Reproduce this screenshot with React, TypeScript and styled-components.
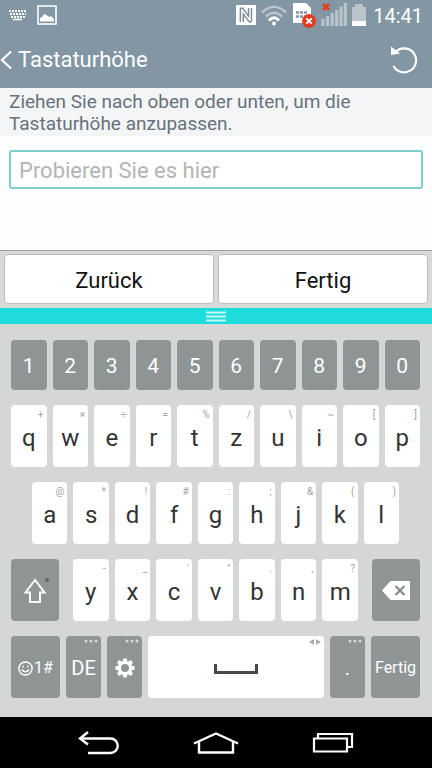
import React from "react";
import styled, { createGlobalStyle, css } from "styled-components";

const GlobalStyle = createGlobalStyle`
  *, *::before, *::after { box-sizing: border-box; }
  body { margin: 0; background: #fff; font-family: Roboto, "Noto Sans", sans-serif; }
  button, input { font-family: inherit; }
  svg { display: block; flex: none; }
`;

const Screen = styled.div`
  display: flex;
  flex-direction: column;
  min-height: 100vh;
  background: #fdfefe;
`;

const Header = styled.header`
  background: #8296a3;
  color: #fff;
`;

const StatusBar = styled.div`
  display: flex;
  align-items: center;
  justify-content: space-between;
  height: 30px;
  padding: 0 9px;
`;

const StatusGroup = styled.div<{ $gap: number }>`
  display: flex;
  align-items: center;
  gap: ${(p) => p.$gap}px;
`;

const Clock = styled.time`
  padding-top: 2px;
  font-size: 20px;
  line-height: 28px;
  margin-left: 2px;
`;

const TitleBar = styled.div`
  display: flex;
  align-items: center;
  justify-content: space-between;
  height: 58px;
  padding: 1px 14px 0 0;
`;

const IconButton = styled.button`
  display: flex;
  padding: 0;
  border: 0;
  background: none;
  color: inherit;
`;

const BackLink = styled.a`
  display: flex;
  align-items: center;
  gap: 5px;
  color: inherit;
  text-decoration: none;
`;

const Title = styled.h1`
  margin: 0;
  font-size: 22px;
  line-height: 28px;
  font-weight: 400;
`;

const Instruction = styled.label`
  display: block;
  padding: 3px 64px 1px 9px;
  background: #f4f5f7;
  color: #66727c;
  font-size: 19px;
  line-height: 22px;
`;

const Content = styled.main`
  flex: 1;
  padding: 14px 9px;
`;

const TryInput = styled.input`
  display: block;
  width: 100%;
  height: 39px;
  padding: 1px 8px 0;
  border: 2px solid #7fcfcd;
  border-radius: 3px;
  background: #fff;
  color: #333;
  font-size: 22px;
  outline: 0;
  &::placeholder { color: #b4b4b4; opacity: 1; }
`;

const Actions = styled.div`
  display: grid;
  grid-template-columns: 1fr 1fr;
  gap: 4px;
  padding: 3px 4px 4px;
  border-top: 1px solid #9b9d9d;
  background: #d8d9d9;
`;

const ActionButton = styled.button`
  height: 50px;
  padding: 2px 0 0;
  border: 1px solid #bcbdbd;
  border-radius: 4px;
  background: #fff;
  color: #111;
  font-size: 22px;
`;

const Grip = styled.button`
  display: flex;
  align-items: center;
  justify-content: center;
  height: 16px;
  padding: 0;
  border: 0;
  background: #1fdcdc;
`;

const Keyboard = styled.section`
  display: flex;
  flex-direction: column;
  gap: 15px;
  padding: 16px 12px 19px 11px;
  background: #d5d6d6;
`;

const KeyRow = styled.div<{ $columns: string; $gap?: number; $inset?: number }>`
  display: grid;
  grid-template-columns: ${(p) => p.$columns};
  gap: ${(p) => p.$gap ?? 6}px;
  padding: 0 ${(p) => p.$inset ?? 0}px;
`;

const Key = styled.button<{ $dark?: boolean; $short?: boolean; $size?: number }>`
  position: relative;
  display: flex;
  align-items: center;
  justify-content: center;
  gap: 1px;
  min-width: 0;
  height: ${(p) => (p.$short ? 50 : 62)}px;
  padding: ${(p) => (p.$dark ? "2px 0 0" : "4px 0 0")};
  border: 0;
  border-radius: 4px;
  font-size: ${(p) => p.$size ?? 24}px;
  line-height: 28px;
  ${(p) =>
    p.$dark
      ? css`background: #8f9594; color: #fff;`
      : css`background: #fff; color: #333;`}
`;

const KeyHint = styled.span`
  position: absolute;
  top: 4px;
  right: 3px;
  color: #a3a3a3;
  font-size: 10px;
  line-height: 12px;
`;

const Corner = styled.span<{ $top?: number; $right?: number }>`
  position: absolute;
  top: ${(p) => p.$top ?? 3}px;
  right: ${(p) => p.$right ?? 3}px;
`;

const NavBar = styled.nav`
  display: grid;
  grid-template-columns: repeat(3, 1fr);
  width: 100%;
  height: 51px;
  padding: 0 40px;
  background: #000;
`;

const NavButton = styled.button`
  display: flex;
  align-items: center;
  justify-content: center;
  padding: 0;
  border: 0;
  background: none;
`;

const KeyboardIcon = () => (
  <svg width="18" height="12" viewBox="0 0 18 12" stroke="#fff" fill="none" strokeWidth="2">
    <path d="M0 2h18M1 5h16M2 8h14" strokeDasharray="2 1" />
    <path d="M4 10.500h9" strokeWidth="1.500" />
  </svg>
);

const PictureIcon = () => (
  <svg width="20" height="20" viewBox="0 0 20 20">
    <rect x="1" y="1" width="18" height="18" fill="none" stroke="#fff" strokeWidth="1.600" />
    <path d="M3 16.500v-3.500l2-1 2-3 2.500 1 2.500 2 2-1 3 3v2.500z" fill="#fff" />
  </svg>
);

const NfcIcon = () => (
  <svg width="20" height="20" viewBox="0 0 20 20" fill="none" strokeLinejoin="round">
    <rect width="20" height="20" rx="1" fill="#fff" />
    <path d="M5.800 17V4.500L14 15.500V3" stroke="#788c98" strokeWidth="4.400" />
    <path d="M5.800 17V4.500L14 15.500V3" stroke="#fff" strokeWidth="1.500" />
  </svg>
);

const WifiIcon = () => (
  <svg width="26" height="22" viewBox="0 0 26 22" fill="none">
    <path d="M1 8.500Q13-3 25 8.500" stroke="#b9c4cb" strokeWidth="2.600" />
    <path d="M5 12.500Q13 5 21 12.500" stroke="#b9c4cb" strokeWidth="2.600" />
    <path d="M8 16.500Q13 11 18 16.500" stroke="#fff" strokeWidth="2.800" />
    <circle cx="13" cy="19.500" r="2" fill="#fff" />
  </svg>
);

const SimIcon = () => (
  <svg width="24" height="26" viewBox="0 0 24 26">
    <path d="M1 1h13l5 5v15H1z" fill="#fff" />
    <path d="M4 10.500h12M4 14.500h12" stroke="#8296a3" strokeWidth="2.400" strokeDasharray="3 1" />
    <circle cx="17" cy="19" r="7" fill="#e23d22" />
    <path d="M14.300 16.300l5.400 5.400M19.700 16.300l-5.400 5.400" stroke="#fff" strokeWidth="1.900" />
  </svg>
);

const SignalIcon = () => (
  <svg width="26" height="24" viewBox="0 0 26 24">
    <path d="M2 23v-7M6.700 23V13M11.200 23V10M15.700 23V7M20 23V3.500M24.300 23V0" stroke="#b9c4cb" strokeWidth="3.200" />
    <path d="M2 1l6 6M8 1L2 7" stroke="#e23d22" strokeWidth="2.600" />
  </svg>
);

const BatteryIcon = () => (
  <svg width="14" height="22" viewBox="0 0 14 22">
    <path d="M3 0h8v3h3v14H0V3h3z" fill="#b9c4cb" />
    <path d="M0 17h14v5H0z" fill="#fff" />
  </svg>
);

const ChevronIcon = () => (
  <svg width="13" height="20" viewBox="0 0 13 20">
    <path d="M11 1.500L2 10l9 8.500" fill="none" stroke="#fff" strokeWidth="2.200" />
  </svg>
);

const ResetIcon = () => (
  <svg width="28" height="28" viewBox="0 0 28 28">
    <path d="M6 5.500A12 12 0 1 1 3.500 20" fill="none" stroke="#fff" strokeWidth="2.200" />
    <path d="M1 0.500v8.500l9-1.500z" fill="#fff" />
  </svg>
);

const GripIcon = () => (
  <svg width="20" height="11" viewBox="0 0 20 11">
    <path d="M0 1.500h20M0 5.500h20M0 9.500h20" stroke="#c6f7f7" strokeWidth="2" />
  </svg>
);

const ShiftIcon = () => (
  <svg width="24" height="26" viewBox="0 0 24 26">
    <path d="M12 2L2.500 14.500H7V24h10v-9.500h4.500z" fill="none" stroke="#fff" strokeWidth="2" />
  </svg>
);

const DeleteIcon = () => (
  <svg width="28" height="20" viewBox="0 0 28 20">
    <path d="M8.500 0H28v19H8.500L0 9.500z" fill="#fff" />
    <path d="M13.500 5l9 9M22.500 5l-9 9" stroke="#858b8a" strokeWidth="2.200" />
  </svg>
);

const SmileIcon = () => (
  <svg width="15" height="15" viewBox="0 0 16 16" fill="none" stroke="#fff" strokeWidth="1.500">
    <circle cx="8" cy="8" r="7" />
    <path d="M4 9q4 5 8 0" />
    <path d="M5.500 5v2M10.500 5v2" />
  </svg>
);

const teeth = [0, 45, 90, 135, 180, 225, 270, 315];
const GearIcon = () => (
  <svg width="20" height="20" viewBox="0 0 20 20">
    <circle cx="10" cy="10" r="5.600" fill="none" stroke="#fff" strokeWidth="3.200" />
    {teeth.map((angle) => (
      <path key={angle} d="M8.300 0.400h3.400l.6 3.600H7.700z" fill="#fff" transform={`rotate(${angle} 10 10)`} />
    ))}
  </svg>
);

const DotsIcon = () => (
  <svg width="14" height="4" viewBox="0 0 14 4" fill="#d9dcdb">
    <circle cx="2" cy="2" r="1.500" />
    <circle cx="7" cy="2" r="1.500" />
    <circle cx="12" cy="2" r="1.500" />
  </svg>
);

const ShiftDot = () => (
  <svg width="4" height="4" viewBox="0 0 4 4">
    <circle cx="2" cy="2" r="2" fill="#626867" />
  </svg>
);

const ArrowsIcon = () => (
  <svg width="12" height="6" viewBox="0 0 12 6" fill="#a9abab">
    <path d="M5 0v6L0 3zM7 0v6l5-3z" />
  </svg>
);

const SpaceIcon = () => (
  <svg width="44" height="11" viewBox="0 0 44 11">
    <path d="M1.500 0v8.500h41V0" fill="none" stroke="#444949" strokeWidth="3" />
  </svg>
);

const NavBackIcon = () => (
  <svg width="42" height="24" viewBox="0 0 42 24" fill="none" stroke="#fff" strokeWidth="2.400">
    <path d="M2 7.500h30.500a7.200 7.200 0 0 1 0 14.500H10" />
    <path d="M10 1L2 7.500l8 6" />
  </svg>
);

const NavHomeIcon = () => (
  <svg width="46" height="22" viewBox="0 0 46 22" fill="none" stroke="#fff" strokeWidth="2.400">
    <path d="M1 11.500L23 1.500l22 10" />
    <path d="M6 10v10.500h34V10" />
  </svg>
);

const NavRecentIcon = () => (
  <svg width="42" height="21" viewBox="0 0 42 21" fill="none" stroke="#fff" strokeWidth="2.200">
    <path d="M2 6.500h33v13H2z" />
    <path d="M6 6V2h34v13h-5" />
  </svg>
);

const digits = "1234567890".split("");
const topRow = [["q", "+"], ["w", "×"], ["e", "÷"], ["r", "="], ["t", "%"], ["z", "/"], ["u", "\\"], ["i", "~"], ["o", "["], ["p", "]"]];
const homeRow = [["a", "@"], ["s", "*"], ["d", "!"], ["f", "#"], ["g", ":"], ["h", ";"], ["j", "&"], ["k", "("], ["l", ")"]];
const lowRow = [["y", "-"], ["x", "_"], ["c", "'"], ["v", "\""], ["b", "."], ["n", ","], ["m", "?"]];

const columns = (n: number) => `repeat(${n}, minmax(0, 1fr))`;

const LetterKeys = ({ keys }: { keys: string[][] }) => (
  <>
    {keys.map(([letter, hint]) => (
      <Key key={letter} type="button">
        <KeyHint>{hint}</KeyHint>
        {letter}
      </Key>
    ))}
  </>
);

export default function App() {
  return (
    <>
      <GlobalStyle />
      <Screen>
        <Header>
          <StatusBar>
            <StatusGroup $gap={10}>
              <KeyboardIcon />
              <PictureIcon />
            </StatusGroup>
            <StatusGroup $gap={5}>
              <NfcIcon />
              <WifiIcon />
              <SimIcon />
              <SignalIcon />
              <BatteryIcon />
              <Clock>14:41</Clock>
            </StatusGroup>
          </StatusBar>
          <TitleBar>
            <BackLink href="#back">
              <ChevronIcon />
              <Title>Tastaturhöhe</Title>
            </BackLink>
            <IconButton type="button" aria-label="Zurücksetzen">
              <ResetIcon />
            </IconButton>
          </TitleBar>
        </Header>
        <Instruction htmlFor="try">
          Ziehen Sie nach oben oder unten, um die Tastaturhöhe anzupassen.
        </Instruction>
        <Content>
          <TryInput id="try" type="text" placeholder="Probieren Sie es hier" />
        </Content>
        <Actions>
          <ActionButton type="button">Zurück</ActionButton>
          <ActionButton type="button">Fertig</ActionButton>
        </Actions>
        <Grip type="button" aria-label="Tastaturhöhe ziehen">
          <GripIcon />
        </Grip>
        <Keyboard aria-label="Tastatur">
          <KeyRow $columns={columns(10)}>
            {digits.map((digit) => (
              <Key key={digit} type="button" $dark $short $size={21}>{digit}</Key>
            ))}
          </KeyRow>
          <KeyRow $columns={columns(10)}>
            <LetterKeys keys={topRow} />
          </KeyRow>
          <KeyRow $columns={columns(9)} $inset={21}>
            <LetterKeys keys={homeRow} />
          </KeyRow>
          <KeyRow $columns="48fr 285fr 48fr" $gap={14}>
            <Key type="button" $dark aria-label="Umschalten">
              <ShiftIcon />
              <Corner $top={19} $right={10}><ShiftDot /></Corner>
            </Key>
            <KeyRow $columns={columns(7)}>
              <LetterKeys keys={lowRow} />
            </KeyRow>
            <Key type="button" $dark aria-label="Löschen">
              <DeleteIcon />
            </Key>
          </KeyRow>
          <KeyRow $columns="49fr 35fr 35fr 176fr 35fr 49fr">
            <Key type="button" $dark $size={16}>
              <SmileIcon />
              1#
            </Key>
            <Key type="button" $dark $size={20}>
              <Corner><DotsIcon /></Corner>
              DE
            </Key>
            <Key type="button" $dark aria-label="Einstellungen">
              <Corner><DotsIcon /></Corner>
              <GearIcon />
            </Key>
            <Key type="button" aria-label="Leertaste">
              <Corner><ArrowsIcon /></Corner>
              <SpaceIcon />
            </Key>
            <Key type="button" $dark $size={20}>
              <Corner><DotsIcon /></Corner>
              .
            </Key>
            <Key type="button" $dark $size={16}>Fertig</Key>
          </KeyRow>
        </Keyboard>
        <NavBar>
          <NavButton type="button" aria-label="Zurück"><NavBackIcon /></NavButton>
          <NavButton type="button" aria-label="Startseite"><NavHomeIcon /></NavButton>
          <NavButton type="button" aria-label="Letzte Apps"><NavRecentIcon /></NavButton>
        </NavBar>
      </Screen>
    </>
  );
}
